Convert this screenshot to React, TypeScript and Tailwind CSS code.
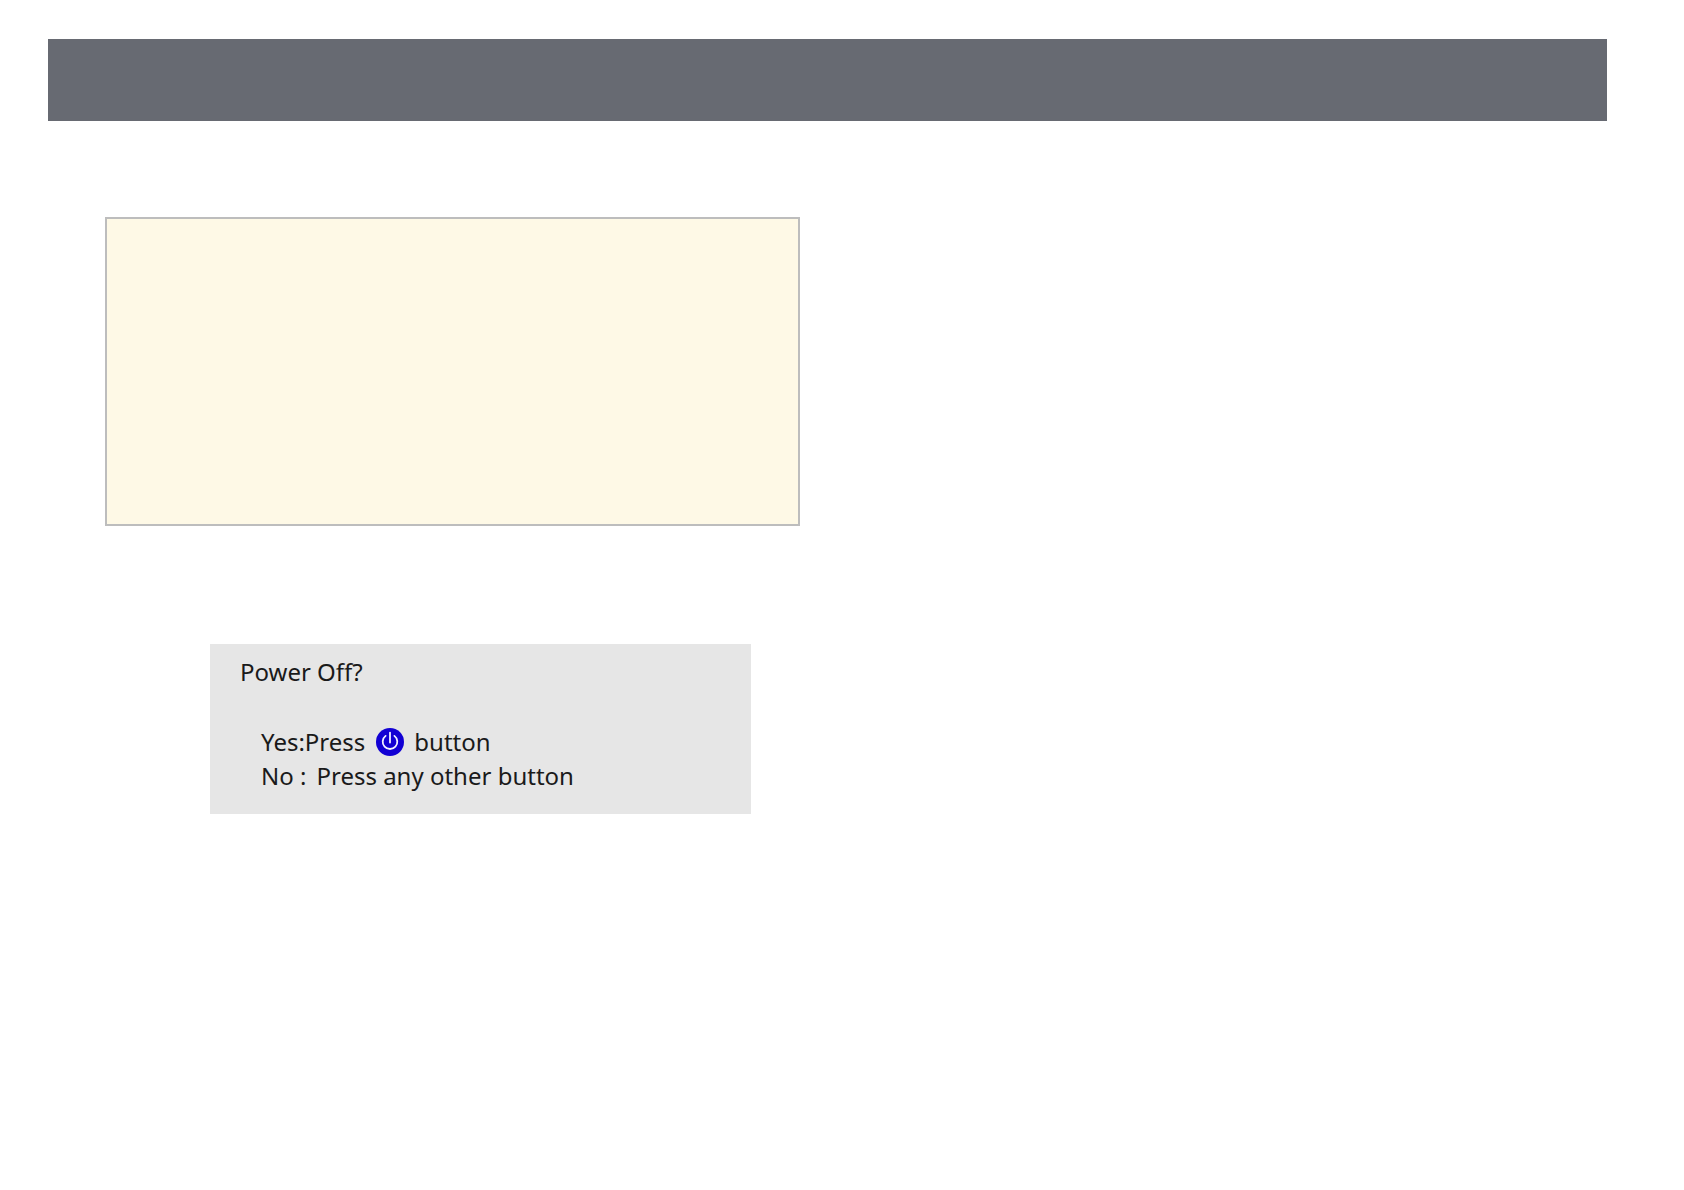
function PowerIcon() {
  return (
    <svg
      viewBox="0 0 28 28"
      className="w-7 h-7 shrink-0"
      fill="none"
      role="img"
      aria-label="power"
    >
      <circle cx="14" cy="14" r="14" fill="#1200d4" />
      <path
        d="M9.6 7.9a7.3 7.3 0 1 0 8.8 0"
        stroke="#f1f0ff"
        strokeWidth="1.8"
        strokeLinecap="round"
      />
      <path d="M14 4.6v10" stroke="#f1f0ff" strokeWidth="1.8" strokeLinecap="round" />
    </svg>
  );
}

function PowerOffMessage() {
  return (
    <section className="ml-[105px] mr-[49px] mt-[118px] bg-[#e6e6e6] pl-[30px] pr-6 pt-[11px] pb-[21px] text-2xl leading-[34px] text-[#1a1a1a]">
      <h1>Power Off?</h1>
      <div className="mt-9 pl-[21px]">
        <p className="flex items-center">
          <span>Yes:Press</span>
          <span className="ml-[11px] mr-[10px] flex">
            <PowerIcon />
          </span>
          <span>button</span>
        </p>
        <p className="flex gap-[10px]">
          <span>No :</span>
          <span>Press any other button</span>
        </p>
      </div>
    </section>
  );
}

export default function App() {
  return (
    <div className="min-h-screen bg-white pt-[39px] font-['Noto_Sans',sans-serif]">
      <header className="ml-12 mr-[77px] h-[82px] bg-[#676a72]" />

      {/* Two-column page, right column is left blank */}
      <main className="grid grid-cols-2 gap-x-12 pl-[105px] pr-[141px] pt-24">
        <div>
          <aside className="h-[309px] border-2 border-[#bdbdbd] bg-[#fef9e6]" />
          <PowerOffMessage />
        </div>
      </main>
    </div>
  );
}
